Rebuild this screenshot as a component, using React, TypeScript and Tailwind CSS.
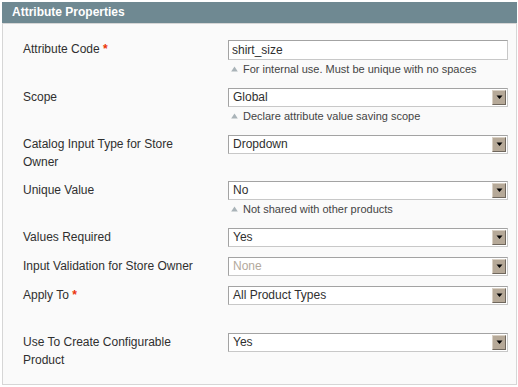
import React from "react";

const font = { fontFamily: '"Liberation Sans", Arial, sans-serif' };

function Arrow() {
  return (
    <div className="absolute right-[1px] top-[1px] bottom-[1px] w-[14px] bg-[#b6a998] border-t border-l border-t-[#d9d0c4] border-l-[#d9d0c4] border-r border-b border-r-[#6f675d] border-b-[#6f675d] flex items-center justify-center">
      <svg width="7" height="5" viewBox="0 0 7 5">
        <path d="M0.5 0.5 L6.5 0.5 L3.5 4 Z" fill="#000" />
      </svg>
    </div>
  );
}

function Select({ value, disabled }: { value: string; disabled?: boolean }) {
  return (
    <div className="relative w-[280px] h-[19px] bg-white border border-t-[#a3a3a3] border-l-[#a3a3a3] border-r-[#c8c8c8] border-b-[#c8c8c8] flex items-center pl-[4px]">
      <span className={`text-[12px] leading-[17px] ${disabled ? "text-[#b3a99c]" : "text-[#2f2f2f]"}`}>{value}</span>
      <Arrow />
    </div>
  );
}

function Note({ text }: { text: string }) {
  return (
    <div className="h-[18px] flex items-center pl-[2px] text-[11px] text-[#444]">
      <svg width="7" height="6" viewBox="0 0 7 6" className="mr-[5px] ml-[1px]">
        <path d="M3.5 0.5 L6.8 5.5 L0.2 5.5 Z" fill="#a9b3b8" />
      </svg>
      <span>{text}</span>
    </div>
  );
}

function Row({
  label,
  required,
  children,
}: {
  label: string;
  required?: boolean;
  children: React.ReactNode;
}) {
  return (
    <div className="flex">
      <div className="w-[205px] pr-[25px] text-[12px] leading-[18px] text-[#2f2f2f]">
        {label}
        {required && <span className="text-[#eb340a] font-bold"> *</span>}
      </div>
      <div className="w-[280px]">{children}</div>
    </div>
  );
}

export default function App() {
  return (
    <div className="w-[518px] h-[387px] bg-white pt-[2px] pl-[2px]" style={font}>
      <div className="w-[515px]">
        <div className="h-[21px] bg-[#6f8992] px-[10px] text-white font-bold text-[12px] leading-[21px]">
          Attribute Properties
        </div>
        <div className="bg-[#fafafa] border border-[#d6d6d6] pt-[16px] pb-[13px] pl-[20px] flex flex-col gap-[10px] h-[362px]">
          <Row label="Attribute Code" required>
            <div className="w-[280px] h-[20px] bg-white border border-t-[#a3a3a3] border-l-[#a3a3a3] border-r-[#c8c8c8] border-b-[#c8c8c8] flex items-center pl-[3px] text-[12px] text-[#2f2f2f]">
              shirt_size
            </div>
            <Note text="For internal use. Must be unique with no spaces" />
          </Row>
          <Row label="Scope">
            <Select value="Global" />
            <Note text="Declare attribute value saving scope" />
          </Row>
          <Row label="Catalog Input Type for Store Owner">
            <Select value="Dropdown" />
          </Row>
          <Row label="Unique Value">
            <Select value="No" />
            <Note text="Not shared with other products" />
          </Row>
          <Row label="Values Required">
            <Select value="Yes" />
          </Row>
          <Row label="Input Validation for Store Owner">
            <Select value="None" disabled />
          </Row>
          <Row label="Apply To" required>
            <Select value="All Product Types" />
            <div className="h-[18px]" />
          </Row>
          <Row label="Use To Create Configurable Product">
            <Select value="Yes" />
          </Row>
        </div>
      </div>
    </div>
  );
}
